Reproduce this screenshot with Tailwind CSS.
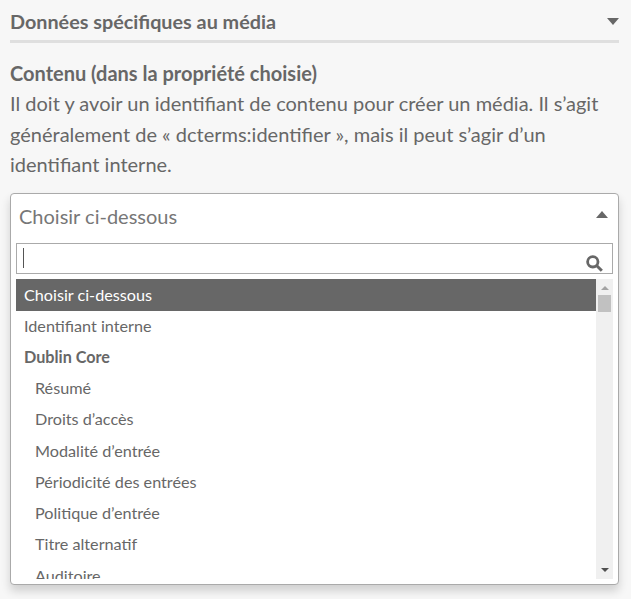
<!DOCTYPE html>
<html lang="fr">
<head>
    <meta charset="UTF-8">
    <title>Données spécifiques au média</title>
    <script src="https://cdn.jsdelivr.net/npm/@tailwindcss/browser@4"></script>
</head>
<body class="bg-[#f7f7f7] overflow-hidden h-[599px] font-['Lato','Noto_Sans',sans-serif] text-[#676767]">
    <div class="px-[10px] w-[629px]">
        <!-- section header -->
        <div class="flex items-center justify-between h-[43px] border-b-[3px] border-[#dfdfdf] pt-[2px]">
            <h2 class="text-[19.8px] leading-[36px] font-bold">Données spécifiques au média</h2>
            <svg width="12" height="7" viewBox="0 0 12 7"><path d="M0 0h12L6 7z" fill="#676767"/></svg>
        </div>

        <div class="mt-[15px] text-[20px] leading-[30.4px]">
            <div class="font-bold">Contenu (dans la propriété choisie)</div>
            <p>Il doit y avoir un identifiant de contenu pour créer un média. Il s’agit généralement de « dcterms:identifier », mais il peut s’agir d’un identifiant interne.</p>
        </div>

        <!-- opened select -->
        <div class="mt-[13px] h-[392px] border border-[#aaaaaa] rounded-[4px] bg-white flex flex-col shadow-[0_6px_10px_rgba(0,0,0,0.16)]">
            <div class="flex items-center justify-between h-[49px] pb-[4px] pl-[8px] pr-[10px]">
                <span class="text-[20px] text-[#777777]">Choisir ci-dessous</span>
                <svg width="12" height="7" viewBox="0 0 12 7" class="mb-[3px]"><path d="M6 0l6 7H0z" fill="#676767"/></svg>
            </div>
            <div class="px-[5px]">
                <div class="flex items-center justify-between h-[31px] border border-[#aaaaaa] bg-white pl-[6px] pr-[9px]">
                    <div class="w-px h-[20px] bg-[#555555]"></div>
                    <svg width="17" height="17" viewBox="0 0 17 17" class="mt-[11px]"><circle cx="6.8" cy="6.8" r="5.2" fill="none" stroke="#676767" stroke-width="2.8"/><path d="M10.8 10.8l5 5" stroke="#676767" stroke-width="3"/></svg>
                </div>
            </div>
            <div class="flex mt-[5px] mx-[5px] h-[300px]">
                <ul class="flex-1 overflow-hidden text-[16.2px] leading-[30.5px]">
                    <li class="bg-[#676767] text-white pl-[8px] h-[32px] leading-[32px]">Choisir ci-dessous</li>
                    <li class="pl-[8px] h-[31.25px]">Identifiant interne</li>
                    <li class="pl-[8px] h-[31.25px] font-bold">Dublin Core</li>
                    <li class="pl-[19px] h-[31.25px]">Résumé</li>
                    <li class="pl-[19px] h-[31.25px]">Droits d’accès</li>
                    <li class="pl-[19px] h-[31.25px]">Modalité d’entrée</li>
                    <li class="pl-[19px] h-[31.25px]">Périodicité des entrées</li>
                    <li class="pl-[19px] h-[31.25px]">Politique d’entrée</li>
                    <li class="pl-[19px] h-[31.25px]">Titre alternatif</li>
                    <li class="pl-[19px] h-[31.25px]">Auditoire</li>
                </ul>
                <!-- scrollbar -->
                <div class="w-[17px] bg-[#f0f0f0] flex flex-col items-center">
                    <svg width="8" height="4" viewBox="0 0 8 4" class="mt-[7px]"><path d="M4 0l4 4H0z" fill="#a3a3a3"/></svg>
                    <div class="w-[13px] h-[17px] bg-[#c1c1c1] mt-[5px]"></div>
                    <svg width="8" height="4" viewBox="0 0 8 4" class="mt-auto mb-[7px]"><path d="M0 0h8L4 4z" fill="#505050"/></svg>
                </div>
            </div>
        </div>
    </div>
</body>
</html>
